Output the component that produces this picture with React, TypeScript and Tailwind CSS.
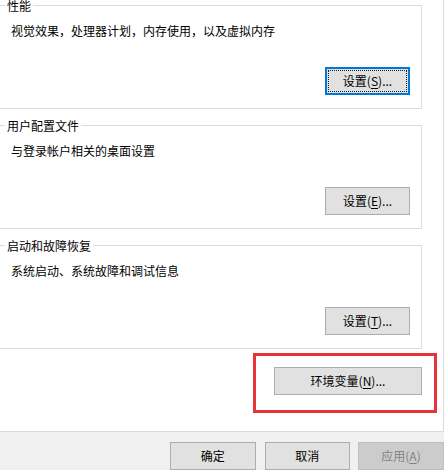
import React from "react";

// ─── Types ───────────────────────────────────────────────────────────────────

interface GroupProps {
    title: string;
    description: string;
    buttonLabel: string;
    accessKey: string;
    focused?: boolean;
    className?: string;
}

// ─── Pieces ──────────────────────────────────────────────────────────────────

function WinButton({
    label,
    accessKey,
    focused = false,
    disabled = false,
    className = "",
}: {
    label: string;
    accessKey?: string;
    focused?: boolean;
    disabled?: boolean;
    className?: string;
}) {
    const tone = disabled
        ? "border border-[#bfbfbf] bg-[#cccccc] text-[#838383]"
        : focused
          ? "border-2 border-[#0078d7] bg-[#e1e1e1] text-black"
          : "border border-[#adadad] bg-[#e1e1e1] text-black";

    return (
        <div className={`relative flex items-center justify-center text-[12px] leading-[16px] ${tone} ${className}`}>
            {focused && (
                <span className="pointer-events-none absolute inset-[1px] border border-dotted border-[#1a1a1a]" />
            )}
            <span>
                {label}
                {accessKey && (
                    <>
                        (<span className="underline underline-offset-2">{accessKey}</span>)
                    </>
                )}
                {!disabled && accessKey && "..."}
            </span>
        </div>
    );
}

function GroupBox({ title, description, buttonLabel, accessKey, focused, className = "" }: GroupProps) {
    return (
        <fieldset className={`h-[109px] w-[424px] border border-[#dcdcdc] ${className}`}>
            <legend className="ml-[6px] px-[2px] text-[12px] leading-[11px] text-black">{title}</legend>
            <p className="mt-[12px] pl-[12px] text-[12px] leading-[16px] text-black">{description}</p>
            <div className="mt-[28px] flex justify-end pr-[11px]">
                <WinButton
                    label={buttonLabel}
                    accessKey={accessKey}
                    focused={focused}
                    className="h-[28px] w-[85px]"
                />
            </div>
        </fieldset>
    );
}

// ─── Page ────────────────────────────────────────────────────────────────────

export default function App() {
    return (
        <div className="h-[470px] w-[444px] overflow-hidden bg-[#f0f0f0] font-['Noto_Sans_CJK_SC','Noto_Sans',sans-serif]">
            {/* White property page */}
            <div className="relative h-[432px] w-[444px] overflow-hidden border-r border-b border-[#dadada] bg-white">
                <div className="-ml-[2px] flex flex-col">
                    <GroupBox
                        title="性能"
                        description="视觉效果，处理器计划，内存使用，以及虚拟内存"
                        buttonLabel="设置"
                        accessKey="S"
                        focused
                    />
                    <GroupBox
                        title="用户配置文件"
                        description="与登录帐户相关的桌面设置"
                        buttonLabel="设置"
                        accessKey="E"
                        className="mt-[11px]"
                    />
                    <GroupBox
                        title="启动和故障恢复"
                        description="系统启动、系统故障和调试信息"
                        buttonLabel="设置"
                        accessKey="T"
                        className="mt-[11px]"
                    />
                    <div className="mt-[18px] flex w-[424px] justify-end">
                        <WinButton label="环境变量" accessKey="N" className="h-[28px] w-[148px]" />
                    </div>
                </div>

                {/* Red annotation rectangle */}
                <div className="pointer-events-none absolute left-[253px] top-[353px] h-[60px] w-[184px] border-[3px] border-[#e5343a]" />
            </div>

            {/* Dialog buttons */}
            <div className="mt-[10px] flex">
                <WinButton label="确定" className="ml-[170px] h-[28px] w-[86px]" />
                <WinButton label="取消" className="ml-[9px] h-[28px] w-[86px]" />
                <WinButton label="应用" accessKey="A" disabled className="ml-[8px] h-[28px] w-[86px] shrink-0" />
            </div>
        </div>
    );
}
